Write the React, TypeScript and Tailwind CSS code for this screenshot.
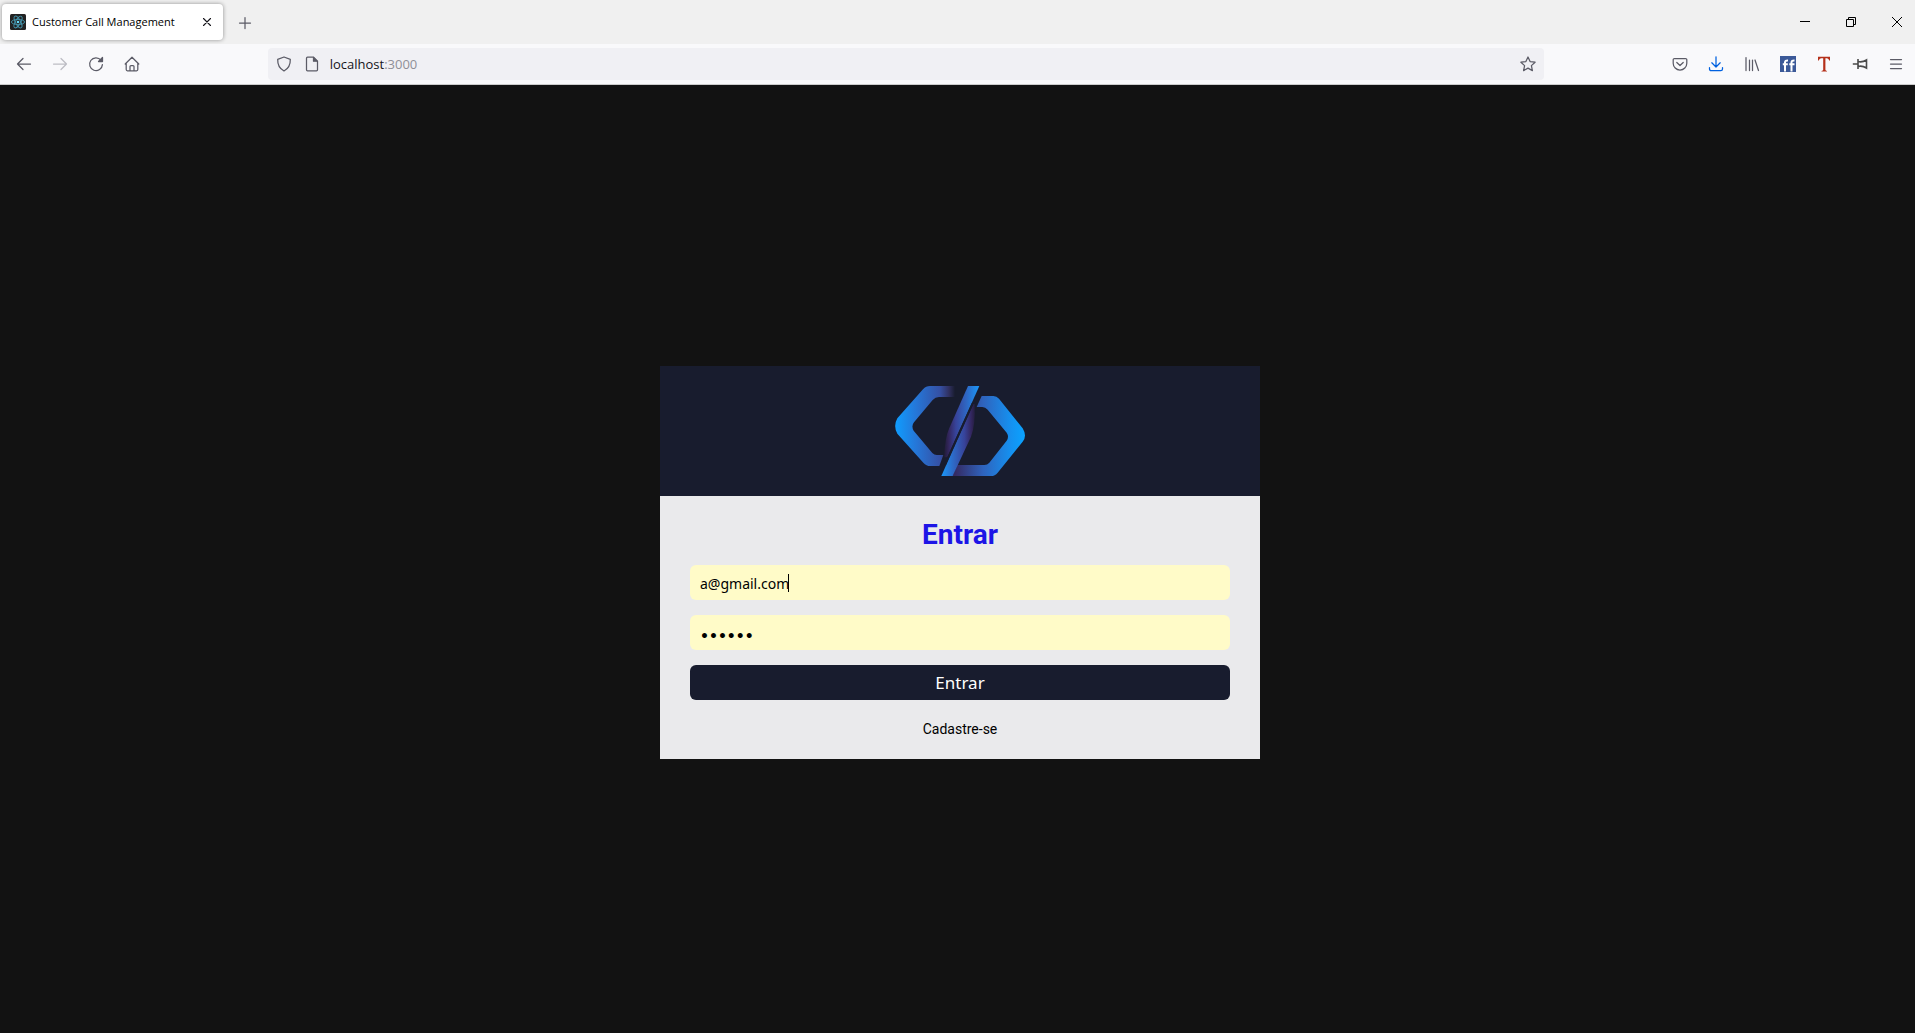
import React from "react";

const ui = "font-['Open_Sans',sans-serif]";

function ReactMark() {
  return (
    <svg className="h-4 w-4 shrink-0" viewBox="0 0 16 16" fill="none" aria-hidden="true">
      <rect width="16" height="16" rx="1.5" fill="#222222" />
      <g stroke="#4595ad" strokeWidth="0.9">
        <ellipse cx="8" cy="8" rx="6.6" ry="2.6" />
        <ellipse cx="8" cy="8" rx="6.6" ry="2.6" transform="rotate(60 8 8)" />
        <ellipse cx="8" cy="8" rx="6.6" ry="2.6" transform="rotate(120 8 8)" />
      </g>
      <circle cx="8" cy="8" r="1.3" fill="#61dafb" />
    </svg>
  );
}

function Icon({ children, className = "" }: { children: React.ReactNode; className?: string }) {
  return (
    <svg
      className={`h-4 w-4 shrink-0 ${className}`}
      viewBox="0 0 16 16"
      fill="none"
      stroke="currentColor"
      strokeWidth="1.25"
      strokeLinecap="round"
      strokeLinejoin="round"
      aria-hidden="true"
    >
      {children}
    </svg>
  );
}

function ToolButton({ label, children, disabled }: { label: string; children: React.ReactNode; disabled?: boolean }) {
  return (
    <button type="button" aria-label={label} disabled={disabled} className="flex h-8 w-9 items-center justify-center text-[#5b5b66] disabled:text-[#bdbdc4]">
      {children}
    </button>
  );
}

function TabBar() {
  return (
    <div className="flex h-11 items-center justify-between overflow-hidden bg-[#f0f0f0]">
      <div className="flex items-center gap-1.5 pl-0.5">
        <div className="flex h-9 w-[221px] items-center rounded bg-white pl-2 pr-2 shadow-[0_0_4px_rgba(0,0,0,0.4)]">
          <ReactMark />
          <span className="ml-1.5 flex-1 whitespace-nowrap pt-px text-[11px] text-black">Customer Call Management</span>
          <button type="button" aria-label="Close tab" className="flex h-4 w-4 items-center justify-center text-[#15141a]">
            <Icon><path d="M4.500 4.500l7 7M11.500 4.500l-7 7" strokeWidth="1.100" /></Icon>
          </button>
        </div>
        <button type="button" aria-label="New tab" className="flex h-8 w-8 items-center justify-center pt-px text-[#5b5b66]">
          <Icon><path d="M8 2.500v11M2.500 8h11" /></Icon>
        </button>
      </div>
      <div className="-mr-[5px] flex text-black">
        <button type="button" aria-label="Minimize" className="flex h-11 w-[46px] items-center justify-center">
          <svg className="h-2.5 w-2.5" viewBox="0 0 10 10" stroke="currentColor" aria-hidden="true"><path d="M0 4.500h10" /></svg>
        </button>
        <button type="button" aria-label="Restore" className="flex h-11 w-[46px] items-center justify-center">
          <svg className="h-2.5 w-2.5" viewBox="0 0 10 10" fill="none" stroke="currentColor" aria-hidden="true"><path d="M.5 2.500h7v7h-7zM2.500 2.500v-2h7v7h-2" /></svg>
        </button>
        <button type="button" aria-label="Close" className="flex h-11 w-[46px] items-center justify-center">
          <svg className="h-2.5 w-2.5" viewBox="0 0 10 10" stroke="currentColor" aria-hidden="true"><path d="M0 0l10 10M10 0L0 10" /></svg>
        </button>
      </div>
    </div>
  );
}

function Toolbar() {
  return (
    <div className="flex h-[41px] items-center justify-between border-b border-[#cccccc] bg-[#f9f9fb]">
      <nav aria-label="Browser" className="flex pl-1.5">
        <ToolButton label="Back"><Icon><path d="M14.500 8H1.500M7 2.500L1.500 8 7 13.500" /></Icon></ToolButton>
        <ToolButton label="Forward" disabled><Icon><path d="M1.500 8h13M9 2.500L14.500 8 9 13.500" /></Icon></ToolButton>
        <ToolButton label="Reload">
          <Icon><path d="M13 4.200A6.400 6.400 0 1 0 14.400 8.600" /><path d="M14.500 1.500v4h-4z" fill="currentColor" /></Icon>
        </ToolButton>
        <ToolButton label="Home">
          <Icon><path d="M1.200 8L8 1.200 14.800 8M2.200 7.200v6.400a1.200 1.200 0 0 0 1.200 1.200h9.200a1.200 1.200 0 0 0 1.200-1.200V7.200M6 14.500v-4a1 1 0 0 1 1-1h2a1 1 0 0 1 1 1v4" /></Icon>
        </ToolButton>
      </nav>
      <div className="flex h-8 w-2/3 items-center rounded bg-[#f0f0f4] pl-2 pr-2 text-[#5b5b66]">
        <Icon><path d="M8 1l6.300 2.300c.2 5.200-1.500 9.200-6.300 11.700C3.200 12.500 1.500 8.500 1.700 3.300z" /></Icon>
        <Icon className="ml-3"><path d="M3.500 1.200h6l4 4v8.600a1 1 0 0 1-1 1h-9a1 1 0 0 1-1-1V2.200a1 1 0 0 1 1-1z" /><path d="M9.500 1.500v3.700h3.700z" fill="currentColor" /></Icon>
        <div className={`${ui} ml-2.5 flex-1 pt-0.5 text-[13px] text-[#15141a]`}>localhost<span className="text-[#8f8f97]">:3000</span></div>
        <button type="button" aria-label="Bookmark">
          <Icon><path d="M8 1l2.100 4.600 5 .6-3.700 3.400 1 5L8 12.100l-4.400 2.500 1-5L.900 6.200l5-.6z" /></Icon>
        </button>
      </div>
      <div className="flex pr-px">
        <ToolButton label="Pocket"><Icon><path d="M2.500 2.500h11a1.300 1.300 0 0 1 1.300 1.300v3.400a6.800 6.800 0 0 1-13.600 0V3.800a1.300 1.300 0 0 1 1.300-1.300zM4.800 6.500L8 9.500l3.200-3" /></Icon></ToolButton>
        <ToolButton label="Downloads"><Icon className="text-[#0061e0]"><path d="M8 .8v10M3.800 6.800L8 11l4.200-4.200M1.500 11.500v1.500a1.700 1.700 0 0 0 1.700 1.700h9.600a1.700 1.700 0 0 0 1.700-1.700v-1.500" /></Icon></ToolButton>
        <ToolButton label="Library"><Icon><path d="M2 1.500v13M5.500 4v10.500M8.500 4v10.500M11 4l3.500 10.500" /></Icon></ToolButton>
        <ToolButton label="Social extension">
          <svg className="h-4 w-4" viewBox="0 0 16 16" fill="none" aria-hidden="true">
            <path fill="#3b5998" d="M0 0h16v16H0z" />
            <path d="M5 15.500V6.500q0-2.200 3-2M2.800 8.200h5M11.500 15.500V6.500q0-2.200 3-2M9.300 8.200h5.200" stroke="#fff" strokeWidth="2" />
          </svg>
        </ToolButton>
        <ToolButton label="Text extension">
          <svg className="h-4 w-4" viewBox="0 0 16 16" aria-hidden="true">
            <path fill="#b5301a" d="M2 .8h12v3.700h-.8q-.4-2-2.200-2.200H9.400v11.400q0 1 1.600 1.200v.7H5.500v-.7q1.700-.2 1.700-1.200V2.300H5Q3.200 2.500 2.800 4.500H2z" />
          </svg>
        </ToolButton>
        <ToolButton label="Pin extension">
          <Icon className="text-[#4a4a4a]"><path d="M.8 8H6M6 3v10M6 5.500c3 .8 5.500.3 8.500-1.500v8c-3-1.800-5.500-2.300-8.500-1.500" strokeWidth="1.600" strokeLinecap="butt" strokeLinejoin="miter" /></Icon>
        </ToolButton>
        <ToolButton label="Menu"><Icon><path d="M2.500 3.500h11M2.500 8h11M2.500 12.500h11" /></Icon></ToolButton>
      </div>
    </div>
  );
}

function Logo() {
  return (
    <svg className="h-[90px] w-[130px]" viewBox="0 0 390 270" role="img" aria-label="Logo">
      <defs>
        <linearGradient id="left" gradientUnits="userSpaceOnUse" x1="0" y1="0" x2="180" y2="0">
          <stop offset="0" stopColor="#0f9dff" />
          <stop offset="0.35" stopColor="#2577d8" />
          <stop offset="0.75" stopColor="#3550a4" />
          <stop offset="0.9" stopColor="#30305f" />
          <stop offset="1" stopColor="#181c2e" />
        </linearGradient>
        <linearGradient id="right" gradientUnits="userSpaceOnUse" x1="390" y1="0" x2="180" y2="0">
          <stop offset="0" stopColor="#0aa3ff" />
          <stop offset="0.2" stopColor="#1591f0" />
          <stop offset="0.6" stopColor="#2f63bd" />
          <stop offset="1" stopColor="#352a62" />
        </linearGradient>
        <linearGradient id="upper" gradientUnits="userSpaceOnUse" x1="250" y1="0" x2="146" y2="0">
          <stop offset="0" stopColor="#1c94f5" />
          <stop offset="0.35" stopColor="#2f66c2" />
          <stop offset="0.65" stopColor="#37439a" />
          <stop offset="0.85" stopColor="#33265e" />
          <stop offset="1" stopColor="#1d1b33" />
        </linearGradient>
        <linearGradient id="lower" gradientUnits="userSpaceOnUse" x1="142" y1="0" x2="244" y2="0">
          <stop offset="0" stopColor="#1c94f5" />
          <stop offset="0.35" stopColor="#2f66c2" />
          <stop offset="0.65" stopColor="#37439a" />
          <stop offset="0.85" stopColor="#33265e" />
          <stop offset="1" stopColor="#1d1b33" />
        </linearGradient>
      </defs>
      <path fill="url(#left)" d="M180 0H105Q93 0 84 10L7 97Q-6 120 7 143L85 230Q94 240 106 240H133L145 207H125Q118 207 112 201L56 134Q48 120 57 109L113 42Q121 33 132 33H180Z" />
      <path fill="url(#right)" d="M260 30H295Q305 30 312 38L383 127Q397 150 383 167L308 260Q300 270 288 270H173L187 237H268Q277 237 283 230L335 164Q343 152 335 140L278 71Q271 63 262 63H245Z" />
      <path fill="url(#upper)" d="M219 0H253L157 214H147Q150 155 162 128Z" />
      <path fill="url(#lower)" d="M139 270H173L228 152Q242 115 239 54L235 54Z" />
      <path stroke="#181c2e" strokeWidth="6" d="M150 236L233 52" />
    </svg>
  );
}

function LoginCard() {
  return (
    <main className="w-full max-w-[600px] bg-[#eaeaec]">
      <header className="flex justify-center bg-[#181c2e] py-5">
        <Logo />
      </header>
      <form className="flex flex-col px-[30px] pb-5 pt-[21px] font-[Roboto,sans-serif]" onSubmit={(e) => e.preventDefault()}>
        <h1 className="mb-3 text-center text-[28px] font-bold leading-9 text-[#1d15e6]">Entrar</h1>
        <div className="flex flex-col gap-[15px] font-['Noto_Sans',sans-serif]">
          <div className="relative flex">
            <input type="email" aria-label="Email" defaultValue="a@gmail.com" className="h-[35px] w-full rounded-md bg-[#fffbc8] px-2.5 pt-0.5 text-sm text-black outline-none" />
            <span aria-hidden="true" className="absolute left-[98px] top-[9px] h-[18px] w-px bg-black" />
          </div>
          <input type="password" aria-label="Senha" defaultValue="123456" className="h-[35px] rounded-md bg-[#fffbc8] px-2.5 pt-1.5 font-['DejaVu_Sans',sans-serif] text-sm font-bold text-black outline-none" />
          <button type="submit" className="h-[35px] rounded-md bg-[#181c2e] pt-px text-[17px] text-white">Entrar</button>
        </div>
        <a href="#cadastro" className="mt-[19px] text-center text-sm text-black">Cadastre-se</a>
      </form>
    </main>
  );
}

export default function App() {
  return (
    <div className={`${ui} flex min-h-screen flex-col bg-[#121212]`}>
      <TabBar />
      <Toolbar />
      <div className="flex flex-1 items-center justify-center pl-[5px] pt-[7px]">
        <LoginCard />
      </div>
    </div>
  );
}
